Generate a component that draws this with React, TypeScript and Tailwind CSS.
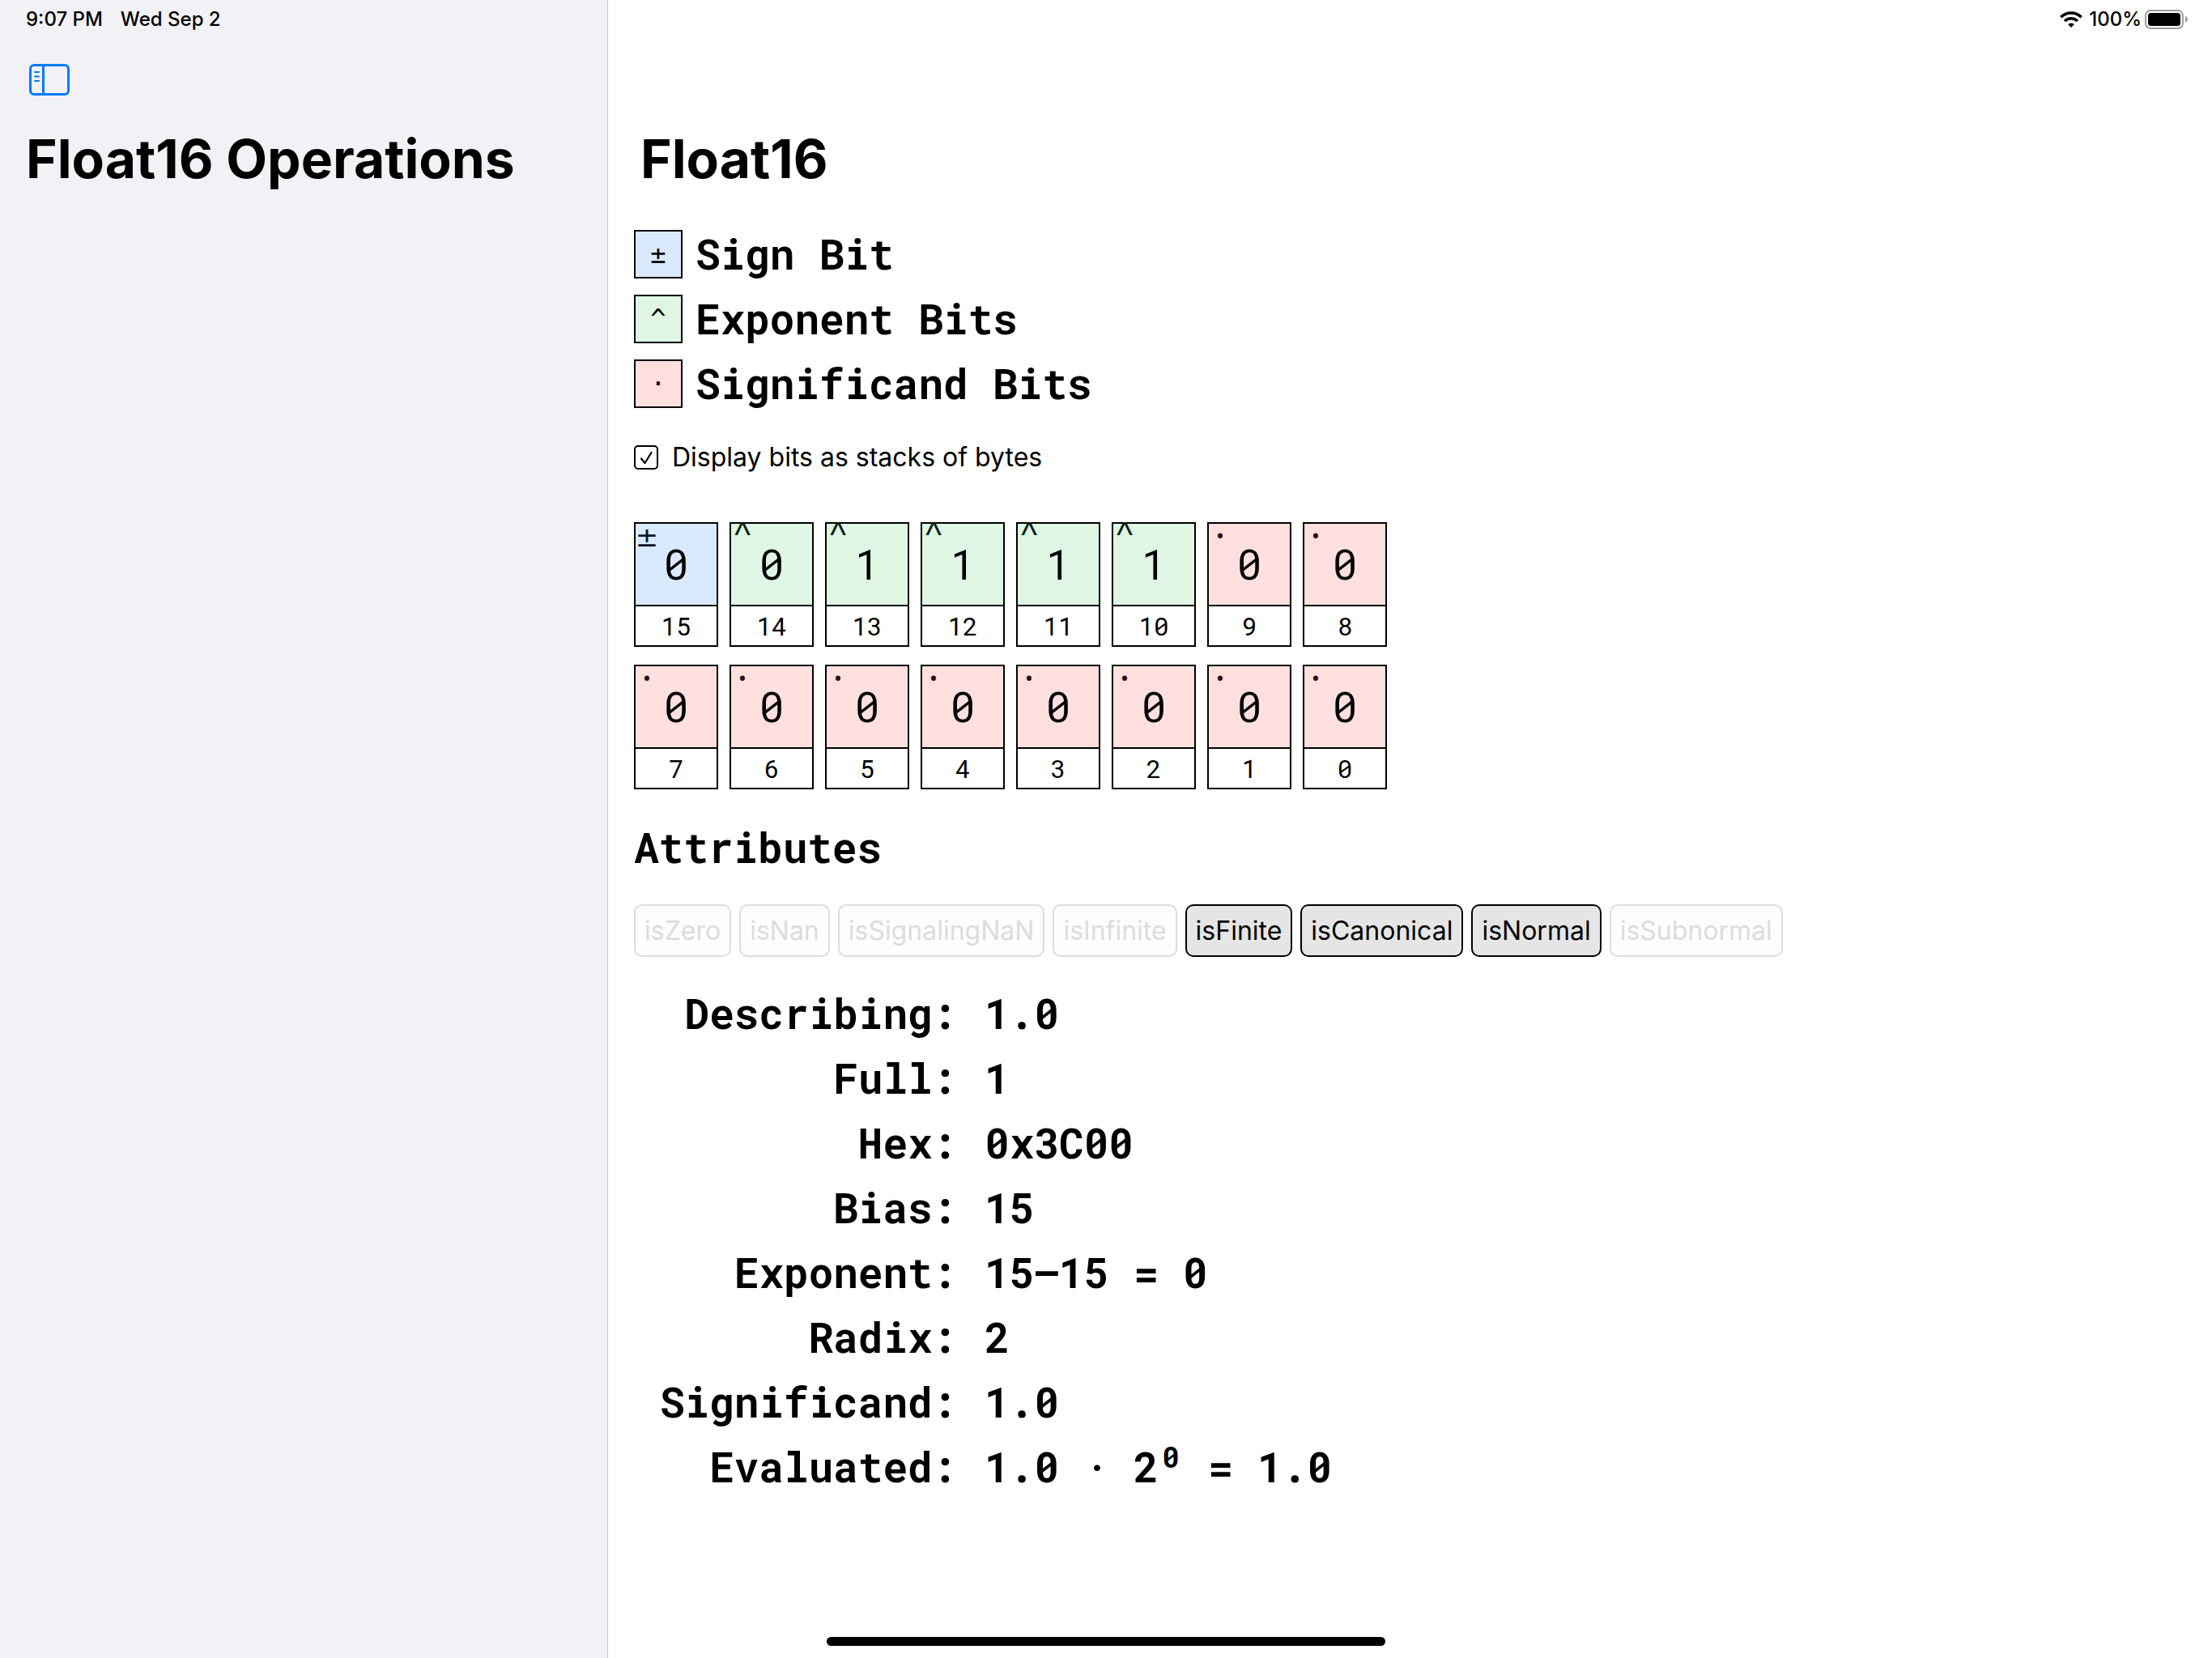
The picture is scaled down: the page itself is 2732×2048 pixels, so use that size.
import { useState } from "react";

type Kind = "sign" | "exponent" | "significand";

const fills: Record<Kind, string> = {
  sign: "bg-[#d9eaff]",
  exponent: "bg-[#dff6e4]",
  significand: "bg-[#ffe0de]",
};

const symbols: Record<Kind, string> = { sign: "±", exponent: "^", significand: "·" };

const markers: Record<Kind, string> = {
  sign: 'font-["DejaVu_Sans",sans-serif] text-[34px] leading-[32px] text-[#05152b]',
  exponent: 'font-["Liberation_Sans",sans-serif] text-[42px] leading-[28px] text-[#0a2211]',
  significand: 'font-["Noto_Sans",sans-serif] text-[48px] leading-[28px] text-[#2b0a08]',
};

const legend: { kind: Kind; label: string }[] = [
  { kind: "sign", label: "Sign Bit" },
  { kind: "exponent", label: "Exponent Bits" },
  { kind: "significand", label: "Significand Bits" },
];

const bitRows = ["00111100", "00000000"];

const attributes = [
  { name: "isZero", on: false },
  { name: "isNan", on: false },
  { name: "isSignalingNaN", on: false },
  { name: "isInfinite", on: false },
  { name: "isFinite", on: true },
  { name: "isCanonical", on: true },
  { name: "isNormal", on: true },
  { name: "isSubnormal", on: false },
];

const values = [
  ["Describing:", "1.0"],
  ["Full:", "1"],
  ["Hex:", "0x3C00"],
  ["Bias:", "15"],
  ["Exponent:", "15–15 = 0"],
  ["Radix:", "2"],
  ["Significand:", "1.0"],
];

const mono = 'font-["Roboto_Mono","Liberation_Mono",monospace]';

function kindOf(index: number): Kind {
  if (index === 15) return "sign";
  return index >= 10 ? "exponent" : "significand";
}

function BitCell({ index, bit }: { index: number; bit: string }) {
  const kind = kindOf(index);
  return (
    <div className="flex w-[104px] flex-col border-2 border-black">
      <button
        type="button"
        aria-label={`Bit ${index}`}
        className={`relative flex h-[100px] items-center justify-center text-[51px] leading-[60px] ${fills[kind]}`}
      >
        <span className={`absolute top-0 left-0 flex w-7 justify-center ${markers[kind]}`}>{symbols[kind]}</span>
        {bit}
      </button>
      <span className="border-t-2 border-black text-center text-[31px] leading-[48px]">{index}</span>
    </div>
  );
}

function SidebarIcon() {
  return (
    <svg width="50" height="39" viewBox="0 0 50 39" fill="none" stroke="#007aff">
      <rect x="1.5" y="1.5" width="47" height="36" rx="4.5" strokeWidth="3" />
      <path d="M17.5 1.5v36" strokeWidth="3" />
      <path d="M7 10h5M7 15.5h5M7 21h5" strokeWidth="2" strokeLinecap="round" />
    </svg>
  );
}

function WifiIcon() {
  return (
    <svg width="28" height="20" viewBox="0 0 28 20" fill="none" stroke="#000" strokeWidth="3.6">
      <path d="M1.3 7.3a18 18 0 0 1 25.4 0" />
      <path d="M6 12a11.4 11.4 0 0 1 16 0" />
      <path d="M14 20l-3.9-3.9a5.6 5.6 0 0 1 7.8 0z" fill="#000" stroke="none" />
    </svg>
  );
}

function BatteryIcon() {
  return (
    <svg width="54" height="24" viewBox="0 0 54 24">
      <rect x="1" y="1" width="46" height="22" rx="6" fill="none" stroke="#9d9d9d" strokeWidth="2" />
      <rect x="4" y="4" width="40" height="16" rx="3.5" />
      <path d="M50 8c2 .6 3 2.200 3 4s-1 3.400-3 4z" fill="#9d9d9d" />
    </svg>
  );
}

export default function App() {
  const [stacked, setStacked] = useState(true);
  return (
    <div className='relative flex min-h-screen bg-white font-["Inter",sans-serif] text-black'>
      <aside className="w-[751px] shrink-0 border-r border-[#c6c6c8] bg-[#f2f1f6] pl-8">
        <div className="flex h-12 items-center gap-[22px] text-[24px] font-medium">
          <span>9:07 PM</span>
          <span>Wed Sep 2</span>
        </div>
        <div className="flex h-[100px] items-center pl-1">
          <button type="button" aria-label="Toggle sidebar">
            <SidebarIcon />
          </button>
        </div>
        <h1 className="text-[66px] leading-[96px] font-bold">Float16 Operations</h1>
      </aside>

      <main className="min-w-0 flex-1">
        <div className="flex h-12 items-center justify-end pr-[29px] text-[24px] font-medium">
          <WifiIcon />
          <span className="ml-2">100%</span>
          <span className="ml-1">
            <BatteryIcon />
          </span>
        </div>
        <h1 className="mt-[100px] pl-10 text-[66px] leading-[96px] font-bold">Float16</h1>

        <div className={`mt-10 pl-8 ${mono}`}>
          <ul className="flex flex-col gap-5">
            {legend.map(({ kind, label }) => (
              <li key={kind} className="flex items-center gap-4">
                <span
                  className={`flex size-[60px] items-center justify-center border-2 border-black font-["DejaVu_Sans_Mono",monospace] text-[32px] ${fills[kind]}`}
                >
                  {symbols[kind]}
                </span>
                <span className="text-[51px] leading-[60px] font-bold">{label}</span>
              </li>
            ))}
          </ul>

          <label className='mt-[41px] flex w-fit items-center gap-[17px] font-["Inter",sans-serif] text-[32px] leading-[40px]'>
            <span className="relative flex">
              <input
                type="checkbox"
                checked={stacked}
                onChange={(e) => setStacked(e.target.checked)}
                className="peer size-[30px] appearance-none rounded-[5px] border-2 border-black"
              />
              <svg
                className="pointer-events-none absolute inset-0 hidden peer-checked:block"
                width="30"
                height="30"
                viewBox="0 0 30 30"
                fill="none"
                stroke="#000"
                strokeWidth="2.2"
                strokeLinecap="round"
                strokeLinejoin="round"
              >
                <path d="M9 16.500l4.500 5.500L21.500 9" />
              </svg>
            </span>
            Display bits as stacks of bytes
          </label>

          <div className="mt-[60px] flex flex-col gap-[22px]">
            {bitRows.map((row, r) => (
              <div key={r} className="flex gap-[14px]">
                {row.split("").map((bit, i) => (
                  <BitCell key={i} index={15 - r * 8 - i} bit={bit} />
                ))}
              </div>
            ))}
          </div>

          <h2 className="mt-[42px] text-[51px] leading-[60px] font-bold">Attributes</h2>

          <ul className='mt-10 flex gap-[10px] font-["Inter",sans-serif] text-[32px] leading-[61px]'>
            {attributes.map(({ name, on }) => (
              <li
                key={name}
                className={`rounded-[10px] border-2 px-[11px] ${on ? "border-black bg-[#e5e5e5]" : "border-[#dddddd] bg-[#fdfdfd] text-[#dcdcdc]"}`}
              >
                {name}
              </li>
            ))}
          </ul>

          <dl className="mt-10 grid w-fit grid-cols-[auto_auto] gap-x-[34px] gap-y-5 pl-8 text-[51px] leading-[60px] font-bold">
            {values.map(([term, value]) => (
              <div key={term} className="contents">
                <dt className="text-right">{term}</dt>
                <dd>{value}</dd>
              </div>
            ))}
            <dt className="text-right">Evaluated:</dt>
            <dd>
              1.0 · 2<sup className="inline-block w-[31px] text-center text-[36px] leading-none">0</sup> = 1.0
            </dd>
          </dl>
        </div>
      </main>

      <div className="absolute bottom-[15px] left-1/2 h-[11px] w-[690px] -translate-x-1/2 rounded-full bg-black" />
    </div>
  );
}
